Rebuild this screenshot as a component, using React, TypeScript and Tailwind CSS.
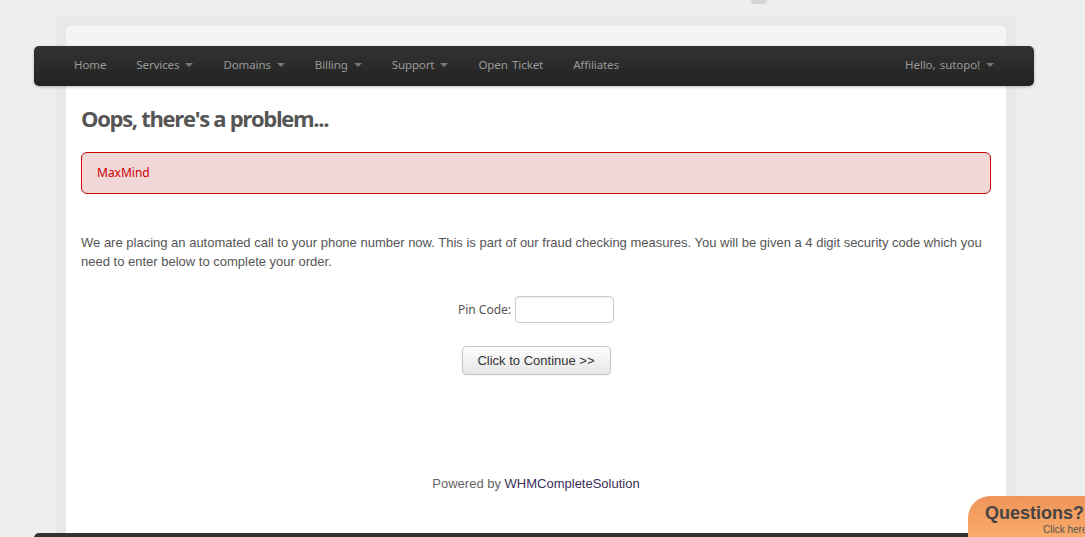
import React from "react";

const Caret = () => (
  <span className="ml-[6px] inline-block h-0 w-0 border-l-[4px] border-r-[4px] border-t-[4px] border-l-transparent border-r-transparent border-t-[#777] align-middle" />
);

const NavItem = ({ label, caret }: { label: string; caret?: boolean }) => (
  <div className="flex items-center px-[15px] text-[11.5px] tracking-[-0.1px] text-[#999] [word-spacing:1.5px]">
    <span>{label}</span>
    {caret && <Caret />}
  </div>
);

export default function App() {
  const nav = "'Noto Sans', 'DejaVu Sans', sans-serif";
  return (
    <div className="relative h-[537px] w-[1085px] overflow-hidden bg-[#eeeeee]" style={{ fontFamily: "'Liberation Sans', Arial, sans-serif" }}>
      <div className="absolute left-[751px] top-[-4px] h-[8px] w-[16px] rounded-full bg-[#d6d6d6]" />
      <div className="ml-[56px] mt-[16px] w-[960px] bg-[#e8e8e8] px-[10px] pt-[10px]">
        <div className="w-[940px] rounded-t-[5px] bg-white">
          <div className="h-[20px] rounded-t-[5px] border-t border-[#fafafa] bg-[#f4f4f4]" />
          <div
            className="-ml-[32px] flex h-[40px] w-[1000px] items-center justify-between rounded-[5px] bg-gradient-to-b from-[#333333] to-[#222222] pb-[2px] pl-[25px] pr-[25px] shadow-[0_1px_3px_rgba(0,0,0,0.25)]"
            style={{ fontFamily: nav }}
          >
            <div className="flex">
              <NavItem label="Home" />
              <NavItem label="Services" caret />
              <NavItem label="Domains" caret />
              <NavItem label="Billing" caret />
              <NavItem label="Support" caret />
              <NavItem label="Open Ticket" />
              <NavItem label="Affiliates" />
            </div>
            <NavItem label="Hello, sutopo!" caret />
          </div>
          <div className="px-[15px] pt-[17px]">
            <h1
              className="text-[22px] font-bold leading-[30px] tracking-[-1.3px] text-[#555]"
              style={{ fontFamily: "'Open Sans', 'Noto Sans', sans-serif" }}
            >
              Oops, there's a problem...
            </h1>
            <div
              className="mt-[19px] flex h-[42px] items-center rounded-[6px] border border-[#cc0000] bg-[#f2d7d9] px-[15px] text-[12px] text-[#cc0000]"
              style={{ fontFamily: nav }}
            >
              MaxMind
            </div>
            <p className="mt-[39px] text-[13px] leading-[19px] text-[#555]">
              We are placing an automated call to your phone number now. This is part of our fraud checking measures. You will be given a 4 digit security code which you need to enter below to complete your order.
            </p>
            <div className="mt-[25px] flex items-center justify-center">
              <span className="mr-[4px] text-[12px] text-[#555]" style={{ fontFamily: nav }}>
                Pin Code:
              </span>
              <input className="h-[27px] w-[99px] rounded-[4px] border border-[#cccccc] bg-white shadow-[inset_0_1px_1px_rgba(0,0,0,0.075)] outline-none" />
            </div>
            <div className="mt-[23px] flex justify-center">
              <button className="h-[29px] w-[149px] rounded-[4px] border border-[#c5c5c5] bg-gradient-to-b from-[#ffffff] to-[#e6e6e6] text-[13px] text-[#333] shadow-[0_1px_2px_rgba(0,0,0,0.05)]">
                Click to Continue &gt;&gt;
              </button>
            </div>
            <div className="pb-[40px] pt-[100px] text-center text-[13px] leading-[18px] text-[#666]">
              Powered by <span className="text-[#3a2f5a]">WHMCompleteSolution</span>
            </div>
          </div>
        </div>
        <div className="-ml-[32px] h-[40px] w-[1000px] rounded-[5px] bg-gradient-to-b from-[#333333] to-[#222222]" />
      </div>
      <div className="absolute left-[968px] top-[496px] h-[60px] w-[140px] rounded-tl-[22px] bg-gradient-to-b from-[#f0945a] to-[#fcb772] pl-[17px] pt-[6px]">
        <div className="text-[18px] font-bold leading-[22px] text-[#444]">Questions?</div>
        <div className="pl-[58px] text-[10px] leading-[12px] text-[#555]">Click here</div>
      </div>
    </div>
  );
}
